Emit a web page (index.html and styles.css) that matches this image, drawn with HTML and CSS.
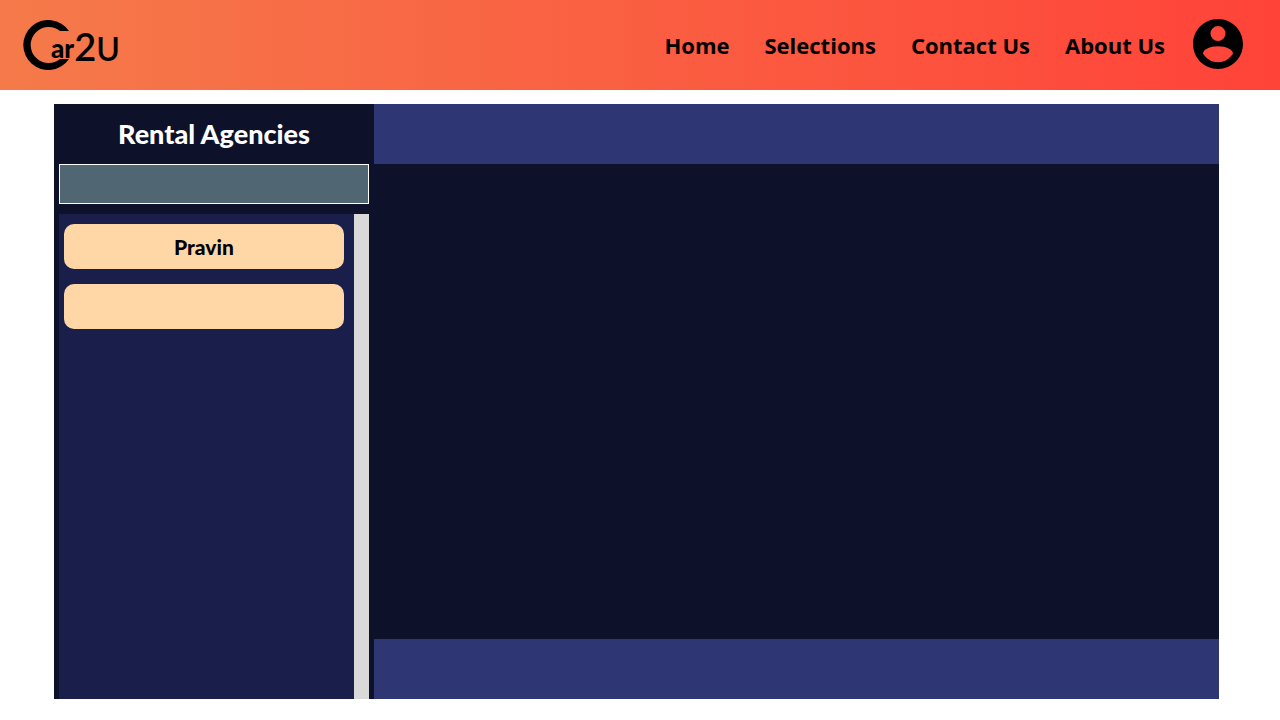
FILE: index.html
```html
<!DOCTYPE html>
<html lang="en">
<head>
  <meta charset="utf-8">
  <meta name="viewport" content="width=device-width, initial-scale=1">
  <title>Car2U</title>
  <link rel="stylesheet" href="styles.css">
</head>
<body>
  <header class="topbar">
    <a class="brand" href="#" aria-label="Car2U">
      <svg class="logo" viewBox="0 0 96 50" width="96" height="50">
        <path d="M46 11A25 25 0 1 0 46 39L37 39A18 18 0 1 1 37 11Z"/>
        <text x="28" y="38"><tspan class="logo-ar">ar</tspan><tspan class="logo-two" dy="3">2</tspan><tspan class="logo-u">U</tspan></text>
      </svg>
    </a>
    <nav class="menu">
      <a href="#">Home</a>
      <a href="#">Selections</a>
      <a href="#">Contact Us</a>
      <a href="#">About Us</a>
    </nav>
    <a class="account" href="#" aria-label="Account">
      <svg viewBox="2 2 20 20" width="50" height="50">
        <path d="M12 2C6.480 2 2 6.480 2 12s4.480 10 10 10 10-4.480 10-10S17.520 2 12 2zm0 2.800a3 3 0 1 1 0 6 3 3 0 1 1 0-6zM12 12.900c3.300 0 6 1.300 6 3-1.400 2.100-3.500 3.400-6 3.400s-4.600-1.300-6-3.400c0-1.700 2.700-3 6-3z" fill-rule="evenodd"/>
      </svg>
    </a>
  </header>
  <main class="chat">
    <aside class="sidebar">
      <h1 class="title">Rental Agencies</h1>
      <input class="search" type="text" aria-label="Search agencies">
      <div class="agencies">
        <div class="agency-list">
          <button class="agency" type="button">Pravin</button>
          <button class="agency" type="button" aria-label="Agency"></button>
        </div>
        <div class="scroll-track"></div>
      </div>
    </aside>
    <section class="conversation">
      <div class="bar"></div>
      <div class="messages"></div>
      <div class="bar"></div>
    </section>
  </main>
</body>
</html>
```
FILE: styles.css
```css
* {
  box-sizing: border-box;
}

body {
  margin: 0;
  min-height: 100vh;
  display: flex;
  flex-direction: column;
  background: #fff;
  font-family: "Open Sans", sans-serif;
}

.topbar {
  display: flex;
  align-items: center;
  height: 90px;
  padding: 0 37px 0 23px;
  background: linear-gradient(90deg, #f57a4a, #ff4339);
}

.brand,
.account {
  display: flex;
}

.account {
  margin: 0 0 2px 28px;
}

.logo {
  overflow: visible;
  font-family: Lato, sans-serif;
}

.logo-ar {
  font-size: 26px;
  font-weight: 900;
}

.logo-two {
  font-size: 38px;
  font-weight: 600;
}

.logo-u {
  font-size: 32px;
  font-weight: 600;
}

.menu {
  display: flex;
  gap: 35px;
  margin-left: auto;
}

.menu a {
  color: #000;
  font-size: 22px;
  font-weight: 700;
  line-height: 32px;
  text-decoration: none;
  white-space: nowrap;
}

.chat {
  flex: 1;
  display: flex;
  margin: 14px 61px 21px 54px;
  background: #0d1129;
}

.sidebar {
  flex: 0 0 320px;
  display: flex;
  flex-direction: column;
  padding: 0 5px;
  font-family: "Futura Condensed", Lato, sans-serif;
}

.title {
  margin: 0;
  color: #fff;
  font-size: 27px;
  font-weight: 900;
  line-height: 60px;
  text-align: center;
}

.search {
  width: 100%;
  height: 40px;
  padding: 0 10px;
  border: 1px solid #fff;
  background: #506773;
  color: #fff;
  font: inherit;
}

.agencies {
  flex: 1;
  display: flex;
  margin-top: 10px;
  background: #1a1e4a;
}

.agency-list {
  flex: 1;
  display: flex;
  flex-direction: column;
  gap: 15px;
  padding: 10px 10px 10px 5px;
}

.agency {
  height: 45px;
  padding: 0;
  border: 0;
  border-radius: 10px;
  background: #ffd6a5;
  color: #000;
  font: inherit;
  font-size: 21px;
  font-weight: 900;
}

.scroll-track {
  width: 15px;
  background: #d9d9d9;
}

.conversation {
  flex: 1;
  display: flex;
  flex-direction: column;
}

.bar {
  height: 60px;
  background: #2e3674;
}

.messages {
  flex: 1;
}
```
